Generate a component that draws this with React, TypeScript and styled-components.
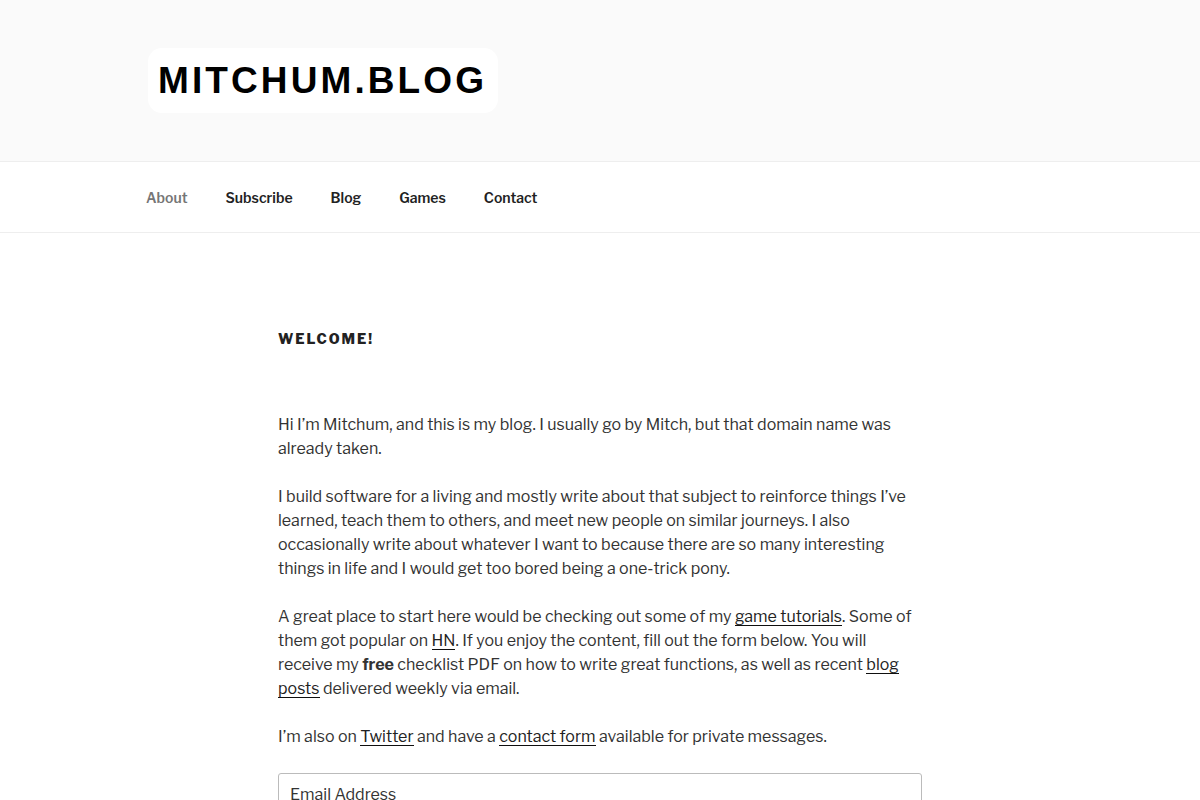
import React, { FC } from "react";
import styled, { createGlobalStyle } from "styled-components";

const GlobalStyle = createGlobalStyle`
  html, body {
    margin: 0;
    padding: 0;
    background: #fff;
  }
  body {
    font-family: "Libre Franklin", "Liberation Sans", Arial, sans-serif;
    color: #333;
    font-size: 16px;
    line-height: 1.5;
  }
`;

const Masthead = styled.header`
  background: #fafafa;
  border-bottom: 1px solid #eee;
  height: 162px;
  box-sizing: border-box;
  padding-top: 48px;
`;

const Wrap = styled.div`
  max-width: 1000px;
  margin: 0 auto;
  padding: 0 48px;
  box-sizing: border-box;
`;

const Logo = styled.a`
  display: inline-flex;
  align-items: center;
  height: 65px;
  padding: 0 11px 0 10px;
  background: #fff;
  border-radius: 14px;
  font-family: "Liberation Sans", Arial, sans-serif;
  font-weight: 700;
  font-size: 37px;
  letter-spacing: 3.1px;
  color: #000;
  text-decoration: none;
`;

const NavBar = styled.nav`
  border-bottom: 1px solid #eee;
  height: 71px;
  box-sizing: border-box;
`;

const Menu = styled.ul`
  list-style: none;
  margin: 0;
  padding: 0;
  display: flex;
  height: 70px;
  align-items: center;
  margin-left: -2px;
`;

const MenuItem = styled.li<{ current?: boolean }>`
  font-size: 14px;
  font-weight: 600;
  margin-right: 38px;
  color: ${p => (p.current ? "#767676" : "#222")};
`;

const Content = styled.main`
  width: 644px;
  margin: 0 auto;
  padding-top: 96px;
`;

const EntryTitle = styled.h1`
  margin: 0 0 64px;
  font-size: 14px;
  font-weight: 800;
  letter-spacing: 0.14em;
  line-height: 20px;
  text-transform: uppercase;
  color: #222;
`;

const Para = styled.p`
  margin: 0 0 24px;
`;

const Link = styled.a`
  color: #222;
  text-decoration: none;
  box-shadow: inset 0 -1px 0 rgba(15, 15, 15, 1);
`;

const EmailInput = styled.input`
  display: block;
  width: 100%;
  box-sizing: border-box;
  border: 1px solid #bbb;
  border-radius: 3px;
  padding: 11px 11px;
  font-family: inherit;
  font-size: 16px;
  color: #333;
  background: #fff;
  &::placeholder {
    color: #333;
  }
`;

const navItems = ["About", "Subscribe", "Blog", "Games", "Contact"];

const App: FC = () => {
  return (
    <>
      <GlobalStyle />
      <Masthead>
        <Wrap>
          <Logo href="#">MITCHUM.BLOG</Logo>
        </Wrap>
      </Masthead>
      <NavBar>
        <Wrap>
          <Menu>
            {navItems.map((item, i) => (
              <MenuItem key={item} current={i === 0}>
                {item}
              </MenuItem>
            ))}
          </Menu>
        </Wrap>
      </NavBar>
      <Content>
        <EntryTitle>Welcome!</EntryTitle>
        <Para>
          Hi I’m Mitchum, and this is my blog. I usually go by Mitch, but that
          domain name was already taken.
        </Para>
        <Para>
          I build software for a living and mostly write about that subject to
          reinforce things I’ve learned, teach them to others, and meet new
          people on similar journeys. I also occasionally write about whatever
          I want to because there are so many interesting things in life and I
          would get too bored being a one-trick pony.
        </Para>
        <Para>
          A great place to start here would be checking out some of my{" "}
          <Link href="#">game tutorials</Link>. Some of them got popular on{" "}
          <Link href="#">HN</Link>. If you enjoy the content, fill out the form
          below. You will receive my <strong>free</strong> checklist PDF on how
          to write great functions, as well as recent{" "}
          <Link href="#">blog posts</Link> delivered weekly via email.
        </Para>
        <Para>
          I’m also on <Link href="#">Twitter</Link> and have a{" "}
          <Link href="#">contact form</Link> available for private messages.
        </Para>
        <EmailInput type="email" placeholder="Email Address" />
      </Content>
    </>
  );
};

export default App;
